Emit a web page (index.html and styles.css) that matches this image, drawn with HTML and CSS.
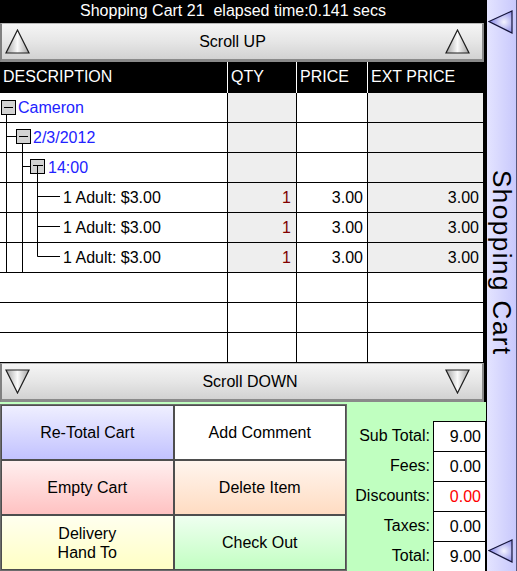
FILE: index.html
```html
<!DOCTYPE html>
<html>
<head>
<meta charset="utf-8">
<title>Shopping Cart</title>
<link rel="stylesheet" href="styles.css">
</head>
<body>
<div class="app">
  <div class="main">
    <div class="title">Shopping Cart 21  elapsed time:0.141 secs</div>

    <div class="scroll">
      <svg class="stri" width="25" height="25" viewBox="0 0 25 25">
        <defs><linearGradient id="gu1" x1="0" y1="0" x2="1" y2="0"><stop offset="0" stop-color="#a4a4a4"/><stop offset="0.5" stop-color="#fafafa"/><stop offset="1" stop-color="#a4a4a4"/></linearGradient></defs>
        <polygon points="12.5,1 24,24 1,24" fill="url(#gu1)" stroke="#1e1e1e" stroke-width="1.2"/>
      </svg>
      <span class="slabel up">Scroll UP</span>
      <svg class="stri" width="25" height="25" viewBox="0 0 25 25">
        <defs><linearGradient id="gu2" x1="0" y1="0" x2="1" y2="0"><stop offset="0" stop-color="#a4a4a4"/><stop offset="0.5" stop-color="#fafafa"/><stop offset="1" stop-color="#a4a4a4"/></linearGradient></defs>
        <polygon points="12.5,1 24,24 1,24" fill="url(#gu2)" stroke="#1e1e1e" stroke-width="1.2"/>
      </svg>
    </div>

    <div class="thead">
      <div class="th">DESCRIPTION</div>
      <div class="th">QTY</div>
      <div class="th">PRICE</div>
      <div class="th last">EXT PRICE</div>
    </div>

    <div class="tbody">
      <svg class="tree" width="62" height="180" viewBox="0 0 62 180">
        <g stroke="#000" stroke-width="1" fill="none">
          <line x1="6.5" y1="22" x2="6.5" y2="179"/>
          <line x1="6.5" y1="43.5" x2="16" y2="43.5"/>
          <line x1="22.5" y1="51" x2="22.5" y2="179"/>
          <line x1="22.5" y1="73.5" x2="30" y2="73.5"/>
          <line x1="37.5" y1="103.5" x2="60" y2="103.5"/>
          <line x1="37.5" y1="133.5" x2="60" y2="133.5"/>
          <line x1="37.5" y1="163.5" x2="60" y2="163.5"/>
        </g>
        <g fill="#d3d3d3" stroke="#000" stroke-width="1">
          <rect x="1.5" y="7.5" width="14" height="14"/>
          <rect x="16.5" y="36.5" width="14" height="14"/>
          <rect x="30.5" y="66.5" width="14" height="14"/>
        </g>
        <g stroke="#000" stroke-width="1">
          <line x1="4" y1="14.5" x2="13" y2="14.5"/>
          <line x1="19" y1="43.5" x2="28" y2="43.5"/>
          <line x1="33" y1="72.5" x2="43" y2="72.5"/>
          <line x1="37.5" y1="72.5" x2="37.5" y2="163.5"/>
        </g>
      </svg>

      <div class="row">
        <div class="cell node lvl0">Cameron</div>
        <div class="cell shade"></div>
        <div class="cell"></div>
        <div class="cell shade"></div>
      </div>
      <div class="row">
        <div class="cell node lvl1">2/3/2012</div>
        <div class="cell shade"></div>
        <div class="cell"></div>
        <div class="cell shade"></div>
      </div>
      <div class="row">
        <div class="cell node lvl2">14:00</div>
        <div class="cell shade"></div>
        <div class="cell"></div>
        <div class="cell shade"></div>
      </div>
      <div class="row">
        <div class="cell lvl3">1 Adult: $3.00</div>
        <div class="cell shade num qty">1</div>
        <div class="cell num">3.00</div>
        <div class="cell shade num">3.00</div>
      </div>
      <div class="row">
        <div class="cell lvl3">1 Adult: $3.00</div>
        <div class="cell shade num qty">1</div>
        <div class="cell num">3.00</div>
        <div class="cell shade num">3.00</div>
      </div>
      <div class="row">
        <div class="cell lvl3">1 Adult: $3.00</div>
        <div class="cell shade num qty">1</div>
        <div class="cell num">3.00</div>
        <div class="cell shade num">3.00</div>
      </div>
      <div class="row">
        <div class="cell"></div><div class="cell"></div><div class="cell"></div><div class="cell"></div>
      </div>
      <div class="row">
        <div class="cell"></div><div class="cell"></div><div class="cell"></div><div class="cell"></div>
      </div>
      <div class="row">
        <div class="cell"></div><div class="cell"></div><div class="cell"></div><div class="cell"></div>
      </div>
    </div>

    <div class="scroll">
      <svg class="stri" width="25" height="25" viewBox="0 0 25 25">
        <defs><linearGradient id="gd1" x1="0" y1="0" x2="1" y2="0"><stop offset="0" stop-color="#a4a4a4"/><stop offset="0.5" stop-color="#fafafa"/><stop offset="1" stop-color="#a4a4a4"/></linearGradient></defs>
        <polygon points="1,1 24,1 12.5,24" fill="url(#gd1)" stroke="#1e1e1e" stroke-width="1.2"/>
      </svg>
      <span class="slabel down">Scroll DOWN</span>
      <svg class="stri" width="25" height="25" viewBox="0 0 25 25">
        <defs><linearGradient id="gd2" x1="0" y1="0" x2="1" y2="0"><stop offset="0" stop-color="#a4a4a4"/><stop offset="0.5" stop-color="#fafafa"/><stop offset="1" stop-color="#a4a4a4"/></linearGradient></defs>
        <polygon points="1,1 24,1 12.5,24" fill="url(#gd2)" stroke="#1e1e1e" stroke-width="1.2"/>
      </svg>
    </div>

    <div class="bottom">
      <div class="actions">
        <div class="btn b-blue">Re-Total Cart</div>
        <div class="btn b-white">Add Comment</div>
        <div class="btn b-red">Empty Cart</div>
        <div class="btn b-peach">Delete Item</div>
        <div class="btn b-yellow">Delivery<br>Hand To</div>
        <div class="btn b-green">Check Out</div>
      </div>
      <div class="totals">
        <div class="trow"><div class="tlabel">Sub Total:</div><div class="tval">9.00</div></div>
        <div class="trow"><div class="tlabel">Fees:</div><div class="tval">0.00</div></div>
        <div class="trow"><div class="tlabel">Discounts:</div><div class="tval neg">0.00</div></div>
        <div class="trow"><div class="tlabel">Taxes:</div><div class="tval">0.00</div></div>
        <div class="trow"><div class="tlabel">Total:</div><div class="tval">9.00</div></div>
      </div>
    </div>
  </div>

  <div class="side">
    <svg class="ptri top" width="25" height="24" viewBox="0 0 25 24">
      <defs><radialGradient id="pg1" cx="0.65" cy="0.5" r="0.6"><stop offset="0" stop-color="#f4f4ff"/><stop offset="1" stop-color="#8a8ae8"/></radialGradient></defs>
      <polygon points="1,11.5 24,1 24,23" fill="url(#pg1)" stroke="#14143a" stroke-width="1.2"/>
    </svg>
    <div class="side-label"><span class="vtext">Shopping Cart</span></div>
    <svg class="ptri bot" width="25" height="24" viewBox="0 0 25 24">
      <defs><radialGradient id="pg2" cx="0.65" cy="0.5" r="0.6"><stop offset="0" stop-color="#f4f4ff"/><stop offset="1" stop-color="#8a8ae8"/></radialGradient></defs>
      <polygon points="1,11.5 24,1 24,23" fill="url(#pg2)" stroke="#14143a" stroke-width="1.2"/>
    </svg>
  </div>
</div>
</body>
</html>
```

FILE: styles.css
```css
html, body {
  margin: 0;
  padding: 0;
  background: #000;
}

body {
  font-family: "Liberation Sans", Arial, sans-serif;
  font-size: 16px;
  color: #000;
  width: 517px;
  height: 571px;
  overflow: hidden;
}

.app {
  display: flex;
  width: 517px;
  height: 571px;
}

.main {
  width: 487px;
  height: 571px;
  background: #000;
  display: flex;
  flex-direction: column;
}

.title {
  width: 486px;
  height: 22px;
  line-height: 21px;
  color: #fff;
  text-align: center;
  white-space: pre;
  padding-right: 20px;
  box-sizing: border-box;
}

.scroll {
  width: 484px;
  height: 39px;
  margin-top: 1px;
  box-sizing: border-box;
  display: flex;
  align-items: center;
  padding: 0 12px 0 3px;
  background: linear-gradient(#f5f5f5, #e6e6e6 50%, #d2d2d2);
  border-top: 1px solid #b8b8b8;
  border-left: 2px solid #808080;
  border-right: 2px solid #8a8a8a;
  border-bottom: 3px solid #8a8a8a;
}

.tbody + .scroll {
  margin-top: 0;
}

.stri {
  flex: none;
  display: block;
}

.slabel {
  flex: 1;
  text-align: center;
  line-height: 20px;
}

.slabel.up {
  padding-right: 10px;
}

.slabel.down {
  padding-left: 25px;
}

.thead {
  width: 484px;
  height: 31px;
  display: grid;
  grid-template-columns: 228px 69px 71px 116px;
  background: #000;
}

.th {
  color: #fff;
  border-right: 1px solid #fff;
  padding-left: 3px;
  line-height: 30px;
  white-space: nowrap;
}

.th.last {
  border-right: none;
}

.tbody {
  position: relative;
  width: 484px;
}

.tree {
  position: absolute;
  left: 0;
  top: 0;
  pointer-events: none;
}

.row {
  display: grid;
  grid-template-columns: 228px 69px 71px 116px;
  height: 30px;
  box-sizing: border-box;
  border-bottom: 1px solid #000;
  background: #fff;
}

.cell {
  border-right: 1px solid #000;
  line-height: 29px;
  white-space: nowrap;
  overflow: hidden;
}

.shade {
  background: #eeeeee;
}

.num {
  text-align: right;
  padding-right: 4px;
}

.qty {
  color: #800000;
  padding-right: 5px;
}

.node {
  color: #2222ff;
}

.lvl0 { padding-left: 18px; }
.lvl1 { padding-left: 33px; }
.lvl2 { padding-left: 48px; }
.lvl3 { padding-left: 63px; }

.bottom {
  width: 486px;
  height: 169px;
  box-sizing: border-box;
  padding-top: 2px;
  background: #c0ffc0;
  display: flex;
  align-items: flex-start;
}

.actions {
  width: 347px;
  box-sizing: border-box;
  padding: 1px;
  background: #6c6c6c;
  display: grid;
  grid-template-columns: 1fr 1fr;
  grid-template-rows: repeat(3, 55px);
}

.btn {
  border: 1px solid #4e4e4e;
  display: flex;
  align-items: center;
  justify-content: center;
  text-align: center;
  line-height: 19px;
}

.b-blue { background: linear-gradient(#efefff, #c2c2ff); }
.b-white { background: #fff; }
.b-red { background: linear-gradient(#ffefef, #ffc2c2); }
.b-peach { background: linear-gradient(#fff5ee, #ffdcc2); }
.b-yellow { background: linear-gradient(#ffffef, #ffffc4); }
.b-green { background: linear-gradient(#effff0, #c2ffc2); }

.totals {
  width: 139px;
  padding-top: 17px;
}

.trow {
  display: grid;
  grid-template-columns: 86px 53px;
  height: 30px;
}

.tlabel {
  text-align: right;
  padding-right: 3px;
  line-height: 30px;
}

.tval {
  background: #fff;
  border: 1px solid #000;
  border-bottom: none;
  text-align: right;
  padding-right: 4px;
  line-height: 29px;
}

.tval.neg {
  color: #ff0000;
}

.side {
  width: 30px;
  height: 571px;
  box-sizing: border-box;
  border-right: 1px solid #56567a;
  background: linear-gradient(to right, #e4e4ff, #c8c8fc);
  display: flex;
  flex-direction: column;
}

.ptri {
  display: block;
  flex: none;
  margin-left: 1px;
}

.ptri.top {
  margin-top: 10px;
}

.ptri.bot {
  margin-bottom: 8px;
}

.side-label {
  flex: 1;
  display: flex;
  align-items: center;
  justify-content: center;
  padding-bottom: 48px;
}

.vtext {
  writing-mode: vertical-rl;
  font-size: 26px;
  letter-spacing: 1.5px;
  line-height: 29px;
  white-space: nowrap;
  color: #000;
}
```
